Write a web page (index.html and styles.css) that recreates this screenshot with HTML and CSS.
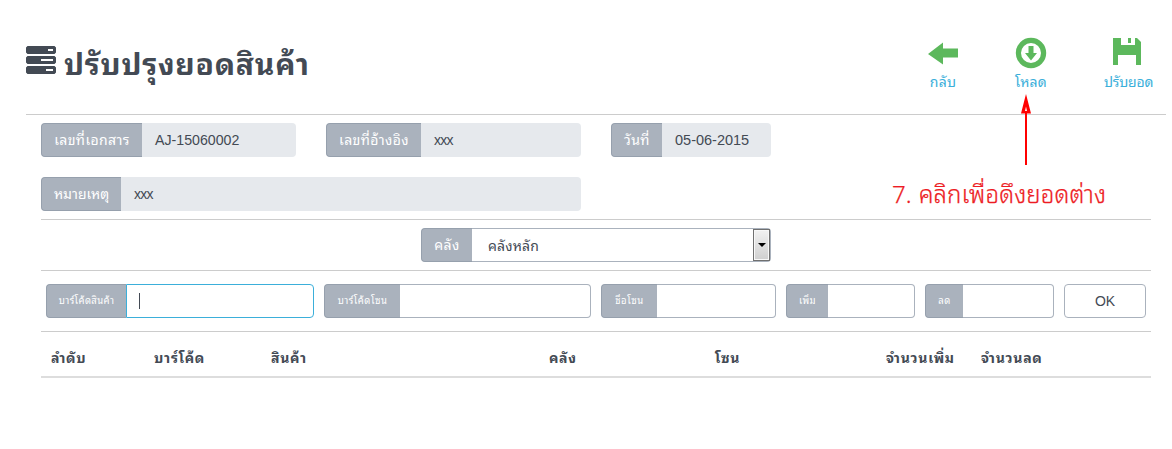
FILE: index.html
```html
<!DOCTYPE html>
<html lang="th">
<head>
<meta charset="utf-8">
<title>ปรับปรุงยอดสินค้า</title>
<link rel="stylesheet" href="styles.css">
</head>
<body>
<header class="header">
  <h1 class="title">
    <svg class="title-icon" width="30" height="28" viewBox="0 0 30 28"><path fill-rule="evenodd" d="M1.500 0h27L30 1.500v5L28.500 8h-27L0 6.500v-5zM22 3v2h5V3zM1.500 10h27l1.500 1.500v5L28.500 18h-27L0 16.500v-5zM15 13v2h12v-2zM1.500 20h27l1.500 1.500v5L28.500 28h-27L0 26.500v-5zM20 23v2h7v-2z"/></svg>
    <span class="title-text">ปรับปรุงยอดสินค้า</span>
  </h1>
  <nav class="actions">
    <a class="action back"><svg width="32" height="32" viewBox="0 0 32 32"><path d="M1 17 16 5.500v6h15v9H16v7z"/></svg><span>กลับ</span></a>
    <a class="action load"><svg width="32" height="32" viewBox="0 0 32 32"><path fill-rule="evenodd" d="M16 .8a15.200 15.200 0 1 1 0 30.400 15.200 15.200 0 0 1 0-30.400zm0 5.200a10 10 0 1 0 0 20 10 10 0 0 0 0-20zM13.500 9h5v7H22l-6 7.500L10 16h3.500z"/></svg><span>โหลด</span></a>
    <a class="action save"><svg width="32" height="32" viewBox="0 0 32 32"><path fill-rule="evenodd" d="M2 1h8v7h14V1h2l4 4v23h-5V18H7v10H2zM17 1h3v5h-3z"/></svg><span>ปรับยอด</span></a>
  </nav>
</header>
<main class="content">
  <div class="row details">
    <div class="group doc"><label class="addon"><span>เลขที่เอกสาร</span></label><div class="field">AJ-15060002</div></div>
    <div class="group ref"><label class="addon"><span>เลขที่อ้างอิง</span></label><div class="field narrow">xxx</div></div>
    <div class="group date"><label class="addon"><span>วันที่</span></label><div class="field">05-06-2015</div></div>
  </div>
  <div class="row">
    <div class="group note"><label class="addon"><span>หมายเหตุ</span></label><div class="field narrow">xxx</div></div>
  </div>
  <div class="row warehouse">
    <div class="group store"><label class="addon"><span>คลัง</span></label><div class="select"><span class="selected">คลังหลัก</span><i class="dropdown"></i></div></div>
  </div>
  <div class="row entry">
    <div class="group product"><label class="addon"><span>บาร์โค้ดสินค้า</span></label><div class="input active"><i class="caret"></i></div></div>
    <div class="group zonecode"><label class="addon"><span>บาร์โค้ดโซน</span></label><div class="input"></div></div>
    <div class="group zonename"><label class="addon"><span>ชื่อโซน</span></label><div class="input"></div></div>
    <div class="group add"><label class="addon"><span>เพิ่ม</span></label><div class="input"></div></div>
    <div class="group cut"><label class="addon"><span>ลด</span></label><div class="input"></div></div>
    <button class="ok">OK</button>
  </div>
  <div class="table-head">
    <b>ลำดับ</b><b>บาร์โค้ด</b><b>สินค้า</b><b>คลัง</b><b>โซน</b><b>จำนวนเพิ่ม</b><b>จำนวนลด</b>
  </div>
</main>
<svg class="arrow" width="12" height="72" viewBox="0 0 12 72"><path fill-rule="evenodd" d="M6 0 11 19.500H7V71H5V19.500H1zM6 12.500 5 17h2z"/></svg>
<div class="callout"><span class="step">7.</span> คลิกเพื่อดึงยอดต่าง</div>
</body>
</html>
```
FILE: styles.css
```css
* { box-sizing: border-box; }
body { margin: 0; width: 1172px; height: 449px; position: relative; overflow: hidden; background: #fff; color: #434a54; font: 14px "Liberation Sans", "Noto Sans Thai Looped", "Noto Looped Thai", Loma, Waree, Garuda, Umpush, Tahoma, sans-serif; }
span, b { white-space: nowrap; }
.header { height: 115px; margin: 0 6px 0 26px; border-bottom: 1px solid #ccc; display: flex; justify-content: space-between; }
.title { margin: 0; padding-top: 46px; display: flex; align-items: flex-start; gap: 8px; font-size: 30px; line-height: 37px; font-weight: 700; letter-spacing: .75px; }
.title-icon { fill: #434a54; flex: none; }
.actions { display: grid; grid-template-columns: 88px 88px 108px; padding-top: 37px; margin-right: -17px; }
.action { display: flex; flex-direction: column; align-items: center; color: #3bafda; font-size: 14px; line-height: 20px; gap: 3px; letter-spacing: .2px; }
.action svg { fill: #5cb85c; }
.save { align-items: flex-start; padding-left: 36px; }
.save span { margin-left: -7px; letter-spacing: -.2px; }
.content { padding: 8px 21px 0 41px; }
.row { display: flex; height: 34px; }
.details { gap: 30px; margin-bottom: 20px; }
.group { display: flex; height: 34px; }
.addon { flex: none; display: flex; align-items: center; justify-content: center; padding-bottom: 3px; background: #aab2bd; border: 1px solid #96a0ad; border-right: 0; border-radius: 4px 0 0 4px; color: #fff; letter-spacing: .4px; }
.field { flex: 1; background: #e6e9ed; border-radius: 0 4px 4px 0; padding-left: 13px; line-height: 34px; font-size: 14.200px; }
.narrow { font-size: 14px; letter-spacing: -.8px; line-height: 35px; }
.doc { width: 255px; } .doc .addon { width: 101px; }
.ref { width: 255px; } .ref .addon { width: 95px; }
.date { width: 160px; } .date .addon { width: 51px; }
.date .field { font-size: 14.500px; }
.note { width: 540px; } .note .addon { width: 80px; letter-spacing: 0; }
.warehouse { height: 52px; margin-top: 8px; padding-top: 8px; border: solid #ccc; border-width: 1px 0; justify-content: center; }
.store { width: 350px; } .store .addon { width: 51px; }
.select { flex: 1; display: flex; align-items: center; justify-content: space-between; border: 1px solid #aab2bd; border-left: 0; border-radius: 0 4px 4px 0; padding-left: 16px; }
.selected { padding-bottom: 2px; letter-spacing: .15px; }
.dropdown { width: 17px; height: 32px; border: 1px solid #707070; background: linear-gradient(#f2f2f2, #ddd 60%, #cfcfcf); box-shadow: inset 0 0 0 1px #f8f8f8; display: flex; align-items: center; justify-content: center; }
.dropdown::after { content: ""; border: 4px solid transparent; border-top-color: #000; border-bottom: 0; }
.entry { height: 61px; padding: 13px 5px 0; gap: 10px; border-bottom: 1px solid #ccc; }
.entry .addon { font-size: 9.500px; }
.input { flex: 1; border: 1px solid #aab2bd; border-left: 0; border-radius: 0 4px 4px 0; }
.active { border: 1px solid #3bafda; padding: 8px 0 0 12px; }
.caret { display: block; width: 1px; height: 16px; background: #434a54; }
.product { width: 268px; } .product .addon { width: 80px; }
.zonecode { width: 267px; } .zonecode .addon { width: 76px; letter-spacing: .5px; }
.zonename { width: 175px; } .zonename .addon { width: 56px; letter-spacing: .6px; }
.add { width: 129px; } .add .addon { width: 42px; }
.cut { width: 129px; } .cut .addon { width: 38px; }
.ok { width: 82px; height: 34px; padding: 0; border: 1px solid #aab2bd; border-radius: 4px; background: #fff; color: #434a54; font: 14px "Liberation Sans", sans-serif; }
.table-head { display: grid; grid-template-columns: 103px 117px 278px 166px 171px 95px 1fr; height: 46px; padding: 16px 0 0 10px; border-bottom: 2px solid #ddd; line-height: 20px; font-size: 14px; letter-spacing: .7px; }
.arrow { position: absolute; left: 1020px; top: 94px; fill: #f00; }
.callout { position: absolute; left: 892px; top: 176px; color: #ed1c24; font-size: 24px; font-weight: 300; line-height: 36px; white-space: nowrap; letter-spacing: .15px; -webkit-text-stroke: .25px #ed1c24; }
.step { font-family: "Noto Sans", sans-serif; }
```
